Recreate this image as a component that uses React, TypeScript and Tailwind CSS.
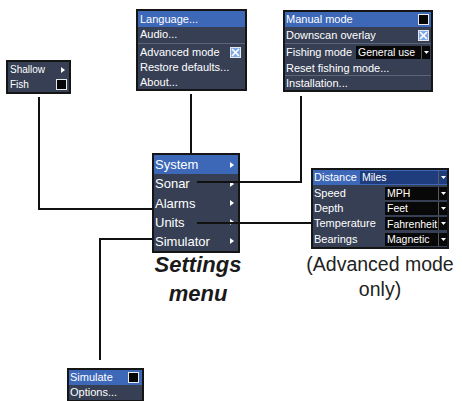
import React from "react";

const Arrow = () => (
  <svg width="4" height="6" viewBox="0 0 4 6" className="shrink-0">
    <path d="M0 0 L4 3 L0 6 Z" fill="#ffffff" />
  </svg>
);

const Check = ({ on }: { on?: boolean }) => (
  <svg width="11" height="11" viewBox="0 0 11 11" className="shrink-0">
    <rect x="0.5" y="0.5" width="10" height="10" fill={on ? "#7fa9e6" : "#050505"} stroke="#e8e8e8" strokeWidth="1" />
    {on && (
      <path d="M2 2 L9 9 M9 2 L2 9" stroke="#ffffff" strokeWidth="1.6" />
    )}
  </svg>
);

const Drop = ({ text, hl, className }: { text: string; hl?: boolean; className: string }) => (
  <div className={`flex items-center h-[13px] text-[10.5px] ${hl ? "bg-[#1f3c7c]" : "bg-[#080808]"} ${className}`}>
    <span className="flex-1 pl-[2px] whitespace-nowrap overflow-hidden">{text}</span>
    <div className="w-px h-full bg-[#5b5b5b] shrink-0" />
    <div className="w-[8px] shrink-0 flex items-center justify-center">
      <svg width="5" height="3" viewBox="0 0 5 3">
        <path d="M0 0 L5 0 L2.5 3 Z" fill="#ffffff" />
      </svg>
    </div>
  </div>
);

const Sep = () => <div className="h-px bg-[#5c6478]" />;

export default function App() {
  return (
    <div className="relative w-[462px] h-[401px] bg-white overflow-hidden font-['Liberation_Sans',Arial,sans-serif]">
      {/* Shallow / Fish */}
      <div className="absolute left-[6px] top-[60px] w-[65px] h-[34px] bg-[#373f55] border-2 border-[#151515] text-white text-[10px] leading-none flex flex-col">
        <div className="flex-1 flex items-center justify-between pl-[2px] pr-[4px]">
          <span>Shallow</span>
          <Arrow />
        </div>
        <div className="flex-1 flex items-center justify-between pl-[2px] pr-[2px]">
          <span>Fish</span>
          <Check />
        </div>
      </div>

      {/* System submenu */}
      <div className="absolute left-[136px] top-[9px] w-[111px] h-[82px] bg-[#373f55] border-2 border-[#151515] text-white text-[11px] leading-none flex flex-col">
        <div className="h-[16px] flex items-center px-[2px] bg-[#3d68b8]">Language...</div>
        <div className="h-[15px] flex items-center px-[2px]">Audio...</div>
        <div className="h-[2px] flex flex-col justify-center"><Sep /></div>
        <div className="h-[16px] flex items-center justify-between pl-[2px] pr-[4px]">
          <span>Advanced mode</span>
          <Check on />
        </div>
        <div className="h-[15px] flex items-center px-[2px]">Restore defaults...</div>
        <div className="flex-1 flex items-center px-[2px]">About...</div>
      </div>

      {/* Sonar submenu */}
      <div className="absolute left-[283px] top-[10px] w-[150px] h-[82px] bg-[#373f55] border-2 border-[#151515] text-white text-[11px] leading-none flex flex-col">
        <div className="h-[15px] flex items-center justify-between pl-[1px] pr-[2px] bg-[#3d68b8]">
          <span>Manual mode</span>
          <Check />
        </div>
        <div className="h-[16px] flex items-center justify-between pl-[1px] pr-[2px]">
          <span>Downscan overlay</span>
          <Check on />
        </div>
        <Sep />
        <div className="h-[17px] flex items-center justify-between pl-[1px] pr-[1px]">
          <span>Fishing mode</span>
          <Drop text="General use" className="w-[74px]" />
        </div>
        <div className="h-[14px] flex items-center pl-[1px]">Reset fishing mode...</div>
        <Sep />
        <div className="flex-1 flex items-center pl-[1px]">Installation...</div>
      </div>

      {/* Main settings menu */}
      <div className="absolute left-[152px] top-[153px] w-[88px] h-[100px] bg-[#373f55] border-2 border-[#151515] text-white text-[13px] leading-none flex flex-col">
        {["System", "Sonar", "Alarms", "Units", "Simulator"].map((t, i) => (
          <div
            key={t}
            className={`flex-1 flex items-center justify-between pl-[1px] pr-[4px] ${i === 0 ? "bg-[#3d68b8]" : ""}`}
          >
            <span>{t}</span>
            <Arrow />
          </div>
        ))}
      </div>

      {/* Units submenu */}
      <div className="absolute left-[311px] top-[168px] w-[138px] h-[81px] bg-[#373f55] border-2 border-[#151515] text-white text-[11px] leading-none flex flex-col">
        <div className="flex-1 flex items-center justify-between pl-[1px] bg-[#3d68b8]">
          <span>Distance</span>
          <Drop text="Miles" hl className="w-[87px]" />
        </div>
        <div className="flex-1 flex items-center justify-between pl-[1px]">
          <span>Speed</span>
          <Drop text="MPH" className="w-[62px]" />
        </div>
        <div className="flex-1 flex items-center justify-between pl-[1px]">
          <span>Depth</span>
          <Drop text="Feet" className="w-[62px]" />
        </div>
        <div className="flex-1 flex items-center justify-between pl-[1px]">
          <span>Temperature</span>
          <Drop text="Fahrenheit" className="w-[62px]" />
        </div>
        <div className="flex-1 flex items-center justify-between pl-[1px]">
          <span>Bearings</span>
          <Drop text="Magnetic" className="w-[62px]" />
        </div>
      </div>

      {/* Simulate submenu */}
      <div className="absolute left-[67px] top-[368px] w-[77px] h-[34px] bg-[#373f55] border-2 border-[#151515] text-white text-[11px] leading-none flex flex-col">
        <div className="h-[15px] flex items-center justify-between pl-[1px] pr-[3px] bg-[#3d68b8]">
          <span>Simulate</span>
          <Check />
        </div>
        <div className="h-[15px] flex items-center pl-[1px]">Options...</div>
      </div>

      {/* Captions */}
      <div className="absolute left-[140px] top-[250px] w-[116px] text-center text-[22px] leading-[29px] font-bold italic text-[#1a1a1a]">
        Settings
        <br />
        menu
      </div>
      <div className="absolute left-[298px] top-[252px] w-[164px] text-center text-[19.5px] leading-[25px] text-[#222222]">
        (Advanced mode
        <br />
        only)
      </div>

      {/* Connector lines */}
      <svg className="absolute inset-0 pointer-events-none" width="462" height="401">
        <g stroke="#111111" strokeWidth="2" fill="none">
          <polyline points="39,97 39,209 153,209" />
          <polyline points="191,94 191,154" />
          <polyline points="301,96 301,182 197,182" />
          <polyline points="197,223 312,223" />
          <polyline points="153,239 100,239 100,360" />
        </g>
      </svg>
    </div>
  );
}
